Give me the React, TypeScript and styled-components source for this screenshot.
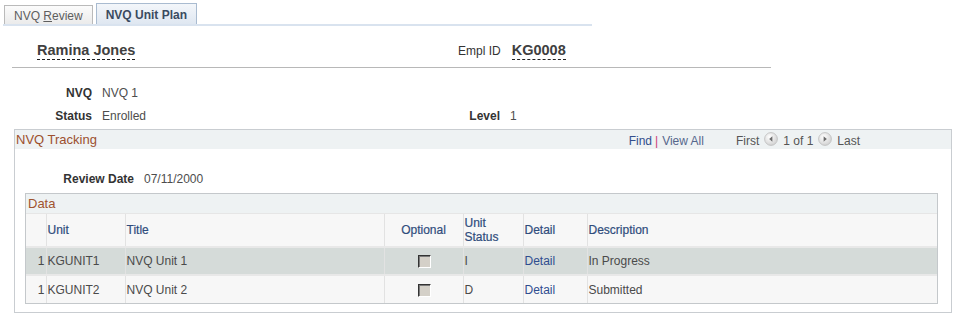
import React from 'react'
import styled, { createGlobalStyle } from 'styled-components'

const GlobalStyle = createGlobalStyle`
  body {
    margin: 0;
    background: #fff;
    font-family: "Liberation Sans", Arial, sans-serif;
    font-size: 12px;
    color: #333;
  }
`

interface Unit {
  seq: number
  code: string
  title: string
  status: string
  description: string
}

const units: Unit[] = [
  { seq: 1, code: 'KGUNIT1', title: 'NVQ Unit 1', status: 'I', description: 'In Progress' },
  { seq: 1, code: 'KGUNIT2', title: 'NVQ Unit 2', status: 'D', description: 'Submitted' },
]

const NavArrow: React.FC<{ dir: 'left' | 'right' }> = ({ dir }) => (
  <svg width="14" height="14" viewBox="0 0 14 14">
    <defs>
      <radialGradient id={`nav-${dir}`} cx="0.4" cy="0.35" r="0.7">
        <stop offset="0" stopColor="#ffffff" />
        <stop offset="1" stopColor="#cfcfcf" />
      </radialGradient>
    </defs>
    <circle cx="7" cy="7" r="6.4" fill={`url(#nav-${dir})`} stroke="#bcbcbc" strokeWidth="0.8" />
    <path d={dir === 'left' ? 'M8.4 4.2 L5.2 7 L8.4 9.8 Z' : 'M5.6 4.2 L8.8 7 L5.6 9.8 Z'} fill="#6a6a6a" />
  </svg>
)

const App: React.FC = () => {
  return (
    <Page>
      <GlobalStyle />
      <TabBar>
        <Tab>
          <span>
            NVQ <u>R</u>eview
          </span>
        </Tab>
        <Tab $active>
          <span>NVQ Unit Plan</span>
        </Tab>
      </TabBar>

      <HeaderBar>
        <NameBlock>
          <KeyValue>Ramina Jones</KeyValue>
        </NameBlock>
        <KeyLabel>Empl ID</KeyLabel>
        <KeyValue>KG0008</KeyValue>
      </HeaderBar>

      <Fields>
        <FieldLabel>NVQ</FieldLabel>
        <FieldValue>NVQ 1</FieldValue>
        <span />
        <span />
        <FieldLabel>Status</FieldLabel>
        <FieldValue>Enrolled</FieldValue>
        <FieldLabel>Level</FieldLabel>
        <FieldValue>1</FieldValue>
      </Fields>

      <Section>
        <SectionHead>
          <SectionTitle>NVQ Tracking</SectionTitle>
          <Nav>
            <NavLink>Find</NavLink>
            <Pipe>|</Pipe>
            <NavLink $muted>View All</NavLink>
            <NavGroup>
              <span>First</span>
              <NavArrow dir="left" />
              <span>1 of 1</span>
              <NavArrow dir="right" />
              <span>Last</span>
            </NavGroup>
          </Nav>
        </SectionHead>

        <ReviewRow>
          <FieldLabel>Review Date</FieldLabel>
          <FieldValue>07/11/2000</FieldValue>
        </ReviewRow>

        <Grid>
          <GridTitle>Data</GridTitle>
          <Table>
            <colgroup>
              <col style={{ width: 20 }} />
              <col style={{ width: 79 }} />
              <col style={{ width: 259 }} />
              <col style={{ width: 79 }} />
              <col style={{ width: 60 }} />
              <col style={{ width: 64 }} />
              <col />
            </colgroup>
            <thead>
              <tr>
                <HeadCell />
                <HeadCell>Unit</HeadCell>
                <HeadCell>Title</HeadCell>
                <HeadCell $center>Optional</HeadCell>
                <HeadCell>
                  Unit
                  <br />
                  Status
                </HeadCell>
                <HeadCell>Detail</HeadCell>
                <HeadCell>Description</HeadCell>
              </tr>
            </thead>
            <tbody>
              {units.map((u, i) => (
                <Row key={u.code} $shaded={i % 2 === 0}>
                  <Cell $right>{u.seq}</Cell>
                  <Cell>{u.code}</Cell>
                  <Cell>{u.title}</Cell>
                  <Cell $center>
                    <Checkbox />
                  </Cell>
                  <Cell>{u.status}</Cell>
                  <Cell>
                    <GridLink>Detail</GridLink>
                  </Cell>
                  <Cell>{u.description}</Cell>
                </Row>
              ))}
            </tbody>
          </Table>
        </Grid>
      </Section>
    </Page>
  )
}

const Page = styled.div`
  width: 959px;
  height: 320px;
`

const TabBar = styled.div`
  display: flex;
  align-items: flex-end;
  gap: 3px;
  width: 588px;
  height: 24px;
  margin-left: 3px;
  padding-left: 1px;
  border-bottom: 2px solid #d9e3ef;
`

const Tab = styled.div<{ $active?: boolean }>`
  display: flex;
  align-items: center;
  box-sizing: border-box;
  height: ${(p) => (p.$active ? 21 : 19)}px;
  padding: 1px 9px 0;
  border: 1px solid ${(p) => (p.$active ? '#a9bbd0' : '#bababa')};
  border-bottom: none;
  background: ${(p) =>
    p.$active
      ? 'linear-gradient(#f3f6fa, #dfe7f1)'
      : 'linear-gradient(#fbfbfb, #ebebeb)'};
  color: ${(p) => (p.$active ? '#3a4a60' : '#5e5e5e')};
  font-weight: ${(p) => (p.$active ? 'bold' : 'normal')};
  white-space: nowrap;

  u {
    text-decoration-thickness: 1px;
  }
`

const HeaderBar = styled.div`
  display: flex;
  align-items: baseline;
  width: 734px;
  margin-left: 12px;
  padding: 15px 0 7px 25px;
  border-bottom: 1px solid #b8b8b8;
`

const NameBlock = styled.div`
  width: 421px;
`

const KeyValue = styled.span`
  display: inline-block;
  font-size: 14.5px;
  font-weight: bold;
  line-height: 18px;
  color: #404040;
  border-bottom: 1px dashed #222;
`

const KeyLabel = styled.span`
  margin-right: 11px;
  color: #333;
`

const Fields = styled.div`
  display: grid;
  grid-template-columns: 92px 288px 100px auto;
  grid-auto-rows: 23px;
  column-gap: 10px;
  align-items: center;
  margin: 13px 0 2px;
`

const FieldLabel = styled.span`
  text-align: right;
  font-weight: bold;
  color: #333;
  white-space: nowrap;
`

const FieldValue = styled.span`
  color: #4d4d4d;
`

const Section = styled.section`
  box-sizing: border-box;
  width: 938px;
  margin-left: 14px;
  border: 1px solid #c9cdd1;
  padding-bottom: 8px;
`

const SectionHead = styled.div`
  display: flex;
  align-items: center;
  justify-content: space-between;
  height: 19px;
  padding: 0 91px 0 1px;
  background: #eef2f3;
`

const SectionTitle = styled.span`
  font-size: 13px;
  color: #9c502e;
`

const Nav = styled.div`
  display: flex;
  align-items: center;
  padding-top: 2px;
`

const NavLink = styled.span<{ $muted?: boolean }>`
  color: ${(p) => (p.$muted ? '#56678c' : '#324e8d')};
`

const Pipe = styled.span`
  margin: 0 4px 0 3px;
  color: #cc3a78;
`

const NavGroup = styled.div`
  display: flex;
  align-items: center;
  gap: 5px;
  margin-left: 32px;
  color: #555;

  svg {
    margin-top: -3px;
  }
`

const ReviewRow = styled.div`
  display: grid;
  grid-template-columns: 119px auto;
  column-gap: 10px;
  align-items: center;
  height: 19px;
  margin-top: 20px;
`

const Grid = styled.div`
  width: 913px;
  margin: 5px 0 0 10px;
  border: 1px solid #c4c8cb;
  box-sizing: border-box;
`

const GridTitle = styled.div`
  height: 19px;
  line-height: 19px;
  padding-left: 2px;
  background: #eef2f3;
  font-size: 13px;
  color: #a0542f;
`

const Table = styled.table`
  width: 100%;
  table-layout: fixed;
  border-collapse: collapse;
`

const HeadCell = styled.th<{ $center?: boolean }>`
  height: 32px;
  padding: 0 1px;
  background: #f7f7f7;
  border-left: 1px solid #e2e2e2;
  border-top: 1px solid #e6e6e6;
  text-align: ${(p) => (p.$center ? 'center' : 'left')};
  font-weight: normal;
  line-height: 14px;
  color: #2f4c7c;
  -webkit-text-stroke: 0.2px #2f4c7c;

  &:first-child {
    border-left: none;
  }
`

const Row = styled.tr<{ $shaded: boolean }>`
  height: 28px;
  background: ${(p) => (p.$shaded ? '#d5dbd9' : '#f7f7f7')};
  border-top: 2px solid #e8e8e8;
`

const Cell = styled.td<{ $center?: boolean; $right?: boolean }>`
  padding: 0 1px;
  border-left: 1px solid #e2e2e2;
  text-align: ${(p) => (p.$center ? 'center' : p.$right ? 'right' : 'left')};
  color: #4a4a4a;
  white-space: nowrap;

  &:first-child {
    border-left: none;
    padding-right: 1px;
  }
`

const GridLink = styled.span`
  color: #2f4d8f;
`

const Checkbox = styled.span`
  display: inline-block;
  box-sizing: border-box;
  width: 13px;
  height: 13px;
  margin-left: 2px;
  vertical-align: middle;
  background: #d4d0c8;
  border: 1px solid;
  border-color: #333 #fff #fff #333;
  box-shadow: inset 1px 1px #7a7a7a;
`

export default App
